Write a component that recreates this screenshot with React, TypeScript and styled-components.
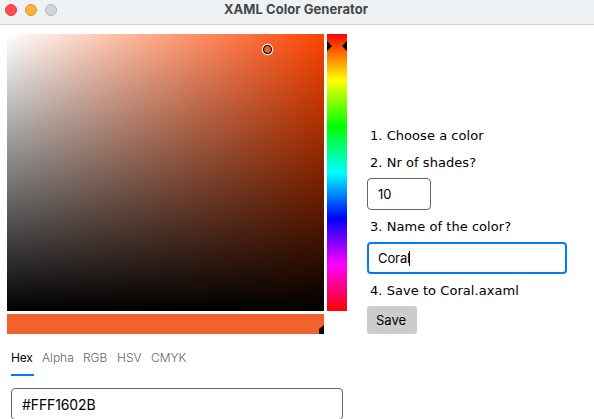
import React from "react";
import styled, { createGlobalStyle } from "styled-components";

const GlobalStyle = createGlobalStyle`
  * { box-sizing: border-box; }
  html, body { margin: 0; background: #fff; overflow: hidden; }
`;

const Window = styled.div`
  width: 594px;
  height: 419px;
  overflow: hidden;
  background: #fff;
  color: #000;
  font-family: Inter, sans-serif;
`;

const TitleBar = styled.header`
  display: grid;
  grid-template-columns: 57px 1fr 60px;
  height: 25px;
  background: #eef2f5;
  border-bottom: 1px solid #d0cfd1;
`;

const TrafficLights = styled.div`
  display: flex;
  gap: 8px;
  padding: 4px 0 0 5px;
`;

const Light = styled.span<{ $fill: string; $edge: string }>`
  width: 12px;
  height: 12px;
  border-radius: 50%;
  background: ${(p) => p.$fill};
  border: 1px solid ${(p) => p.$edge};
`;

const Title = styled.h1`
  margin: 0;
  padding-left: 1px;
  text-align: center;
  font-size: 13px;
  font-weight: 700;
  line-height: 19px;
  letter-spacing: 0.05px;
  color: #454647;
`;

const Content = styled.main`
  display: grid;
  grid-template-columns: 340px 220px;
  column-gap: 20px;
  padding: 9px 0 0 7px;
`;

const Picker = styled.section`
  display: grid;
  grid-template-columns: 317px 20px;
  grid-template-rows: 277px 20px;
  gap: 3px;
`;

const Spectrum = styled.div`
  position: relative;
  background: linear-gradient(to bottom, transparent, #000),
    linear-gradient(to right, #fff, #ff4400);
`;

const Thumb = styled.svg`
  position: absolute;
  left: 254px;
  top: 9px;
`;

const HueBar = styled.div`
  position: relative;
  background: linear-gradient(to bottom, #f00, #ff0 16.67%, #0f0 33.33%, #0ff 50%, #00f 66.67%, #f0f 83.33%, #f00);
`;

const HueMarker = styled.svg`
  position: absolute;
  left: 0;
  top: 7px;
`;

const Preview = styled.div`
  position: relative;
  background: #f2622d;
`;

const AlphaMarker = styled.svg`
  position: absolute;
  right: 0;
  bottom: 0;
`;

const Tabs = styled.nav`
  display: flex;
  height: 42px;
  margin: 0 0 12px 4px;
`;

const Tab = styled.div<{ $width: number; $active?: boolean }>`
  flex: 0 0 ${(p) => p.$width}px;
  padding-top: 15px;
  height: 42px;
  font-size: 12px;
  font-weight: ${(p) => (p.$active ? 400 : 300)};
  line-height: 18px;
  letter-spacing: ${(p) => (p.$active ? -0.25 : 0)}px;
  white-space: nowrap;
  color: ${(p) => (p.$active ? "#000" : "#666")};
  background: ${(p) =>
    p.$active ? "linear-gradient(#007bff, #007bff) left bottom / 23px 2px no-repeat" : "none"};
`;

const Field = styled.div<{ $width: number; $focused?: boolean; $large?: boolean }>`
  display: flex;
  align-items: center;
  width: ${(p) => p.$width}px;
  height: 32px;
  padding-left: ${(p) => (p.$focused ? 9 : 10)}px;
  border: ${(p) => (p.$focused ? "2px solid #007bff" : "1px solid #666")};
  border-radius: 4px;
  font-size: ${(p) => (p.$large ? 14 : 13)}px;
  letter-spacing: ${(p) => (p.$large ? -0.12 : -0.1)}px;
`;

const HexField = styled(Field)`
  margin-left: 4px;
`;

const Caret = styled.i`
  width: 1px;
  height: 15px;
  margin-left: -1px;
  background: #000;
`;

const Steps = styled.section`
  padding-top: 88px;
`;

const Label = styled.div<{ $height?: number; $drop?: number }>`
  height: ${(p) => p.$height ?? 32}px;
  padding: ${(p) => p.$drop ?? 0}px 0 0 3px;
  font-family: "DejaVu Sans", sans-serif;
  font-size: 13px;
  line-height: 27px;
  letter-spacing: 0.05px;
  white-space: nowrap;
`;

const SaveButton = styled.button`
  display: block;
  width: 50px;
  height: 28px;
  padding: 0 2px 1px 0;
  border: 0;
  border-radius: 3px;
  background: #ccc;
  color: #000;
  font: 400 13px Inter, sans-serif;
`;

export default function App() {
  return (
    <Window>
      <GlobalStyle />
      <TitleBar>
        <TrafficLights>
          <Light $fill="#ff4b50" $edge="#e5393f" />
          <Light $fill="#ffb03b" $edge="#dc9330" />
          <Light $fill="#d1d5d8" $edge="#b4b8bb" />
        </TrafficLights>
        <Title>XAML Color Generator</Title>
      </TitleBar>
      <Content>
        <div>
          <Picker>
            <Spectrum>
              <Thumb width="13" height="13" viewBox="0 0 13 13">
                <circle cx="6.5" cy="6.5" r="5" fill="none" stroke="#fff" strokeWidth="1.4" />
                <circle cx="6.5" cy="6.5" r="4" fill="none" stroke="#000" strokeWidth="1.2" />
              </Thumb>
            </Spectrum>
            <HueBar>
              <HueMarker width="20" height="10" viewBox="0 0 20 10">
                <path d="M0 0L5 5L0 10ZM20 0L15 5L20 10Z" fill="#000" />
              </HueMarker>
            </HueBar>
            <Preview>
              <AlphaMarker width="5" height="9" viewBox="0 0 5 9">
                <path d="M5 0L0 4V9H5Z" fill="#000" />
              </AlphaMarker>
            </Preview>
          </Picker>
          <Tabs>
            <Tab $width={31} $active>Hex</Tab>
            <Tab $width={41}>Alpha</Tab>
            <Tab $width={34}>RGB</Tab>
            <Tab $width={34}>HSV</Tab>
            <Tab $width={40}>CMYK</Tab>
          </Tabs>
          <HexField $width={332} $large>#FFF1602B</HexField>
        </div>
        <Steps>
          <Label $height={27}>1. Choose a color</Label>
          <Label $height={29}>2. Nr of shades?</Label>
          <Field $width={64}>10</Field>
          <Label $drop={3}>3. Name of the color?</Label>
          <Field $width={200} $focused>
            Coral
            <Caret />
          </Field>
          <Label $drop={3}>4. Save to Coral.axaml</Label>
          <SaveButton>Save</SaveButton>
        </Steps>
      </Content>
    </Window>
  );
}
